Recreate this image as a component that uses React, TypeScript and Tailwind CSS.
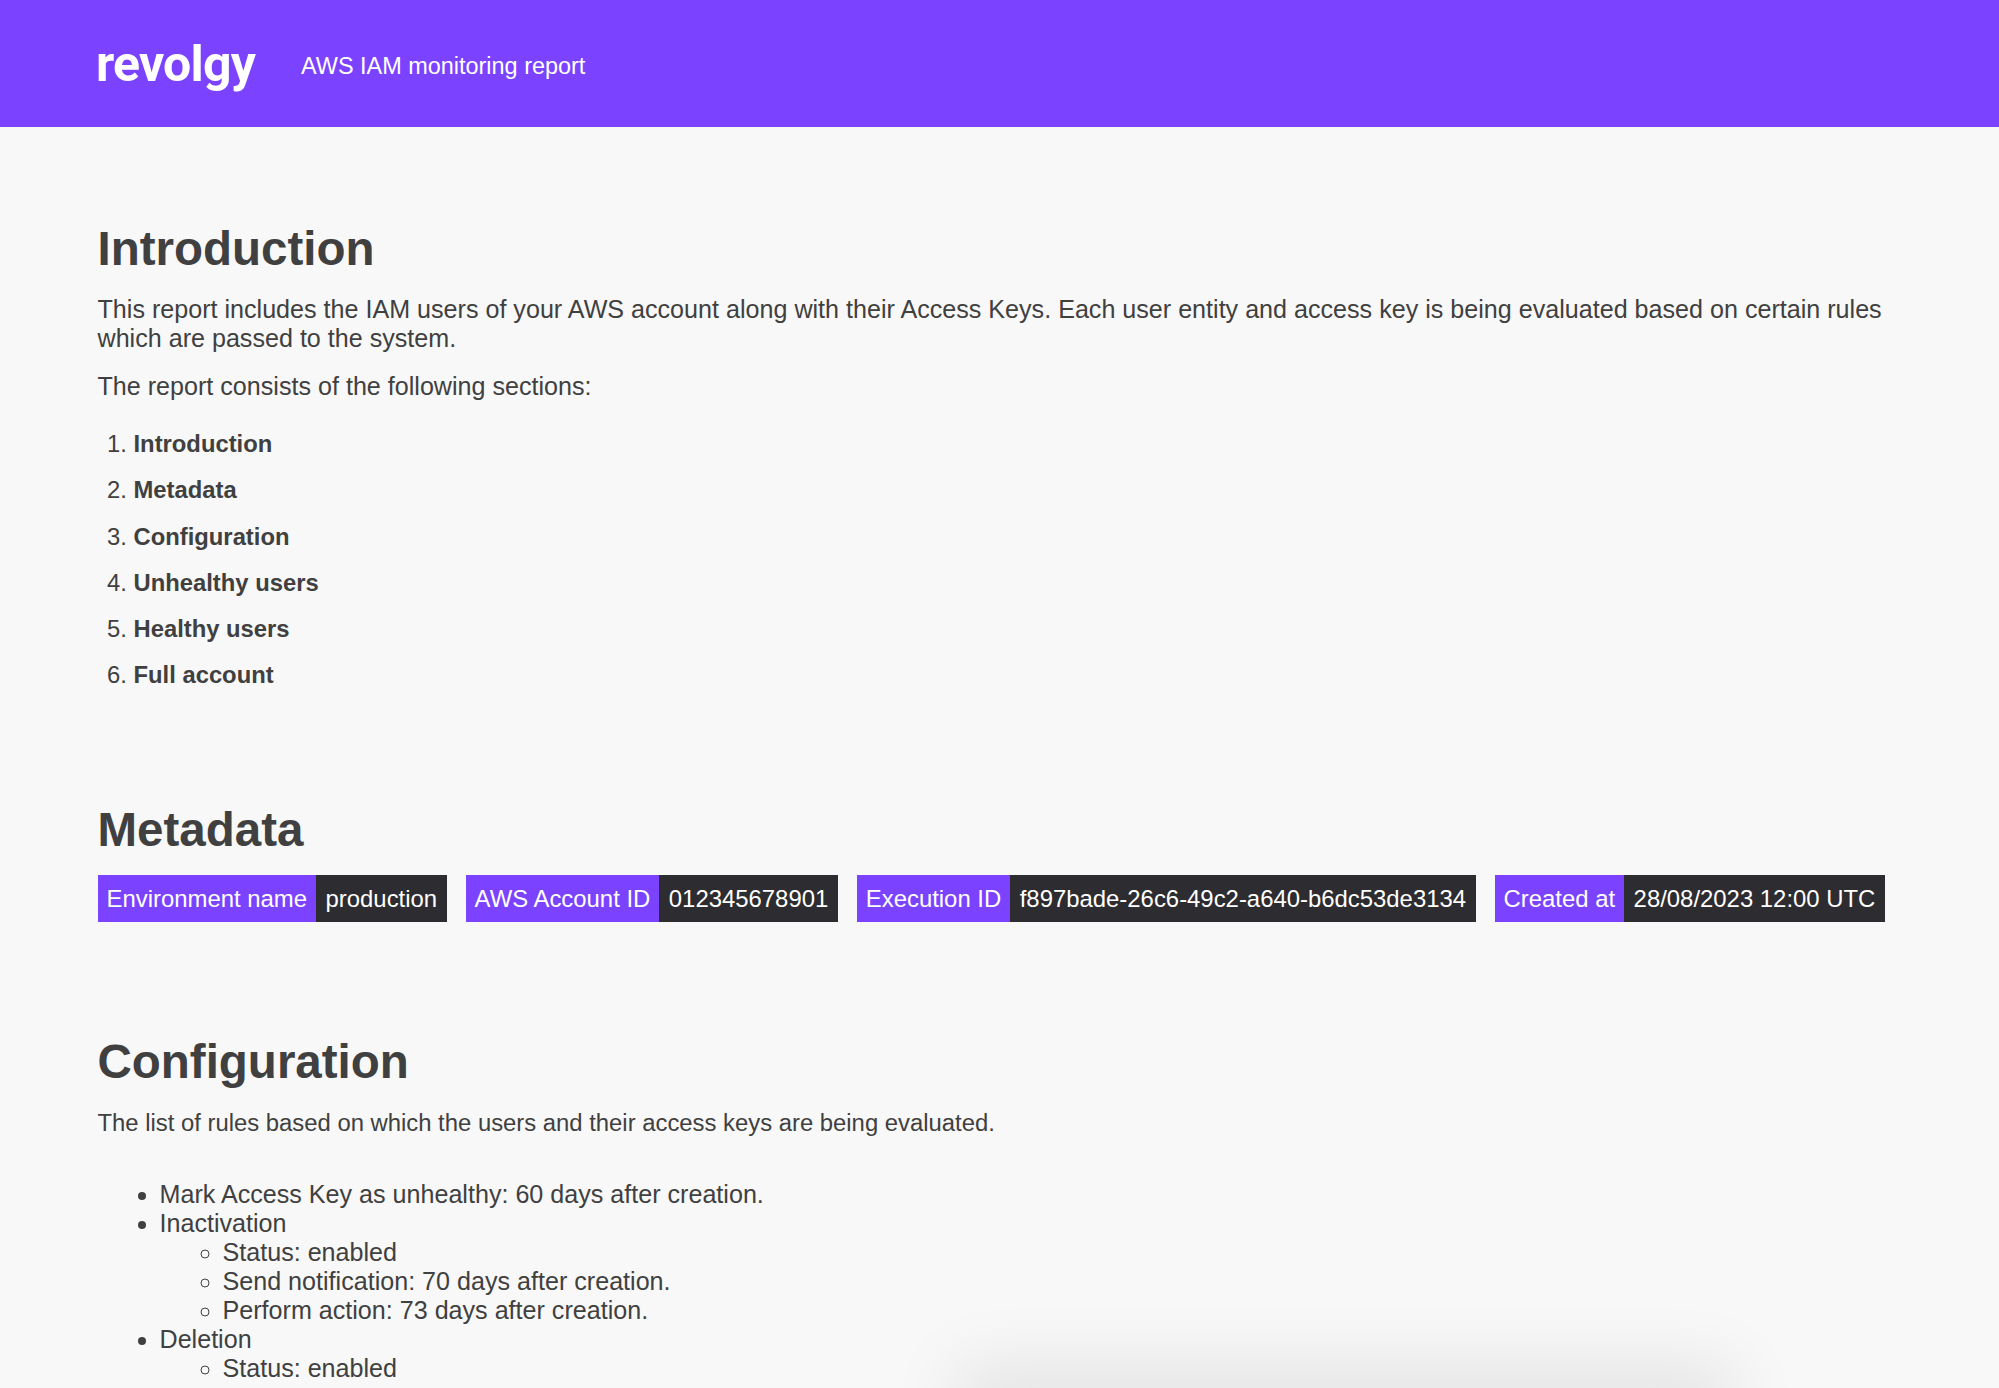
export default function App() {
  const toc = ["Introduction", "Metadata", "Configuration", "Unhealthy users", "Healthy users", "Full account"];
  const meta = [
    ["Environment name", "production"],
    ["AWS Account ID", "012345678901"],
    ["Execution ID", "f897bade-26c6-49c2-a640-b6dc53de3134"],
    ["Created at", "28/08/2023 12:00 UTC"],
  ];
  return (
    <div className="relative h-[1388px] overflow-hidden bg-[#f8f8f8] text-[#404040] font-['Liberation_Sans',Arial,sans-serif] text-[25.12px] leading-[29px]">
      <header className="h-[127px] bg-[#7b42ff] flex items-center pl-[96px] text-white">
        <div className="w-[205px] text-[50px] leading-none font-bold tracking-[-0.8px] font-[Roboto,sans-serif] mt-[1px]">revolgy</div>
        <div className="text-[23.45px] mt-[6px]">AWS IAM monitoring report</div>
      </header>
      <main className="pl-[97.5px] pr-[98px]">
        <h1 className="mt-[91px] text-[47.5px] leading-[62px] font-bold">Introduction</h1>
        <p className="mt-[15px]">This report includes the IAM users of your AWS account along with their Access Keys. Each user entity and access key is being evaluated based on certain rules which are passed to the system.</p>
        <p className="mt-[19px]">The report consists of the following sections:</p>
        <ol className="mt-[28px] pl-[36px] list-decimal text-[23.8px]">
          {toc.map((t) => (
            <li key={t} className="h-[46.3px] font-bold marker:font-normal">{t}</li>
          ))}
        </ol>
        <h1 className="mt-[92.6px] text-[47.5px] leading-[62px] font-bold">Metadata</h1>
        <div className="mt-[14px] flex gap-[19px] text-[23.9px]">
          {meta.map(([k, v]) => (
            <div key={k} className="flex h-[47px] items-center text-white">
              <span className="h-full flex items-center px-[9px] bg-[#7b42ff]">{k}</span>
              <span className="h-full flex items-center px-[9.5px] bg-[#2d2c30]">{v}</span>
            </div>
          ))}
        </div>
        <h1 className="mt-[109px] text-[47.5px] leading-[62px] font-bold">Configuration</h1>
        <p className="mt-[15px] text-[23.85px]">The list of rules based on which the users and their access keys are being evaluated.</p>
        <ul className="mt-[43px] pl-[62px] list-disc">
          <li>Mark Access Key as unhealthy: 60 days after creation.</li>
          <li>Inactivation
            <ul className="pl-[63px] list-[circle]">
              <li>Status: enabled</li>
              <li>Send notification: 70 days after creation.</li>
              <li>Perform action: 73 days after creation.</li>
            </ul>
          </li>
          <li>Deletion
            <ul className="pl-[63px] list-[circle]">
              <li>Status: enabled</li>
            </ul>
          </li>
        </ul>
      </main>
      <div className="absolute left-[985px] top-[1396px] h-[10px] w-[720px] shadow-[0_0_70px_30px_rgba(0,0,0,0.09)]" />
    </div>
  );
}
